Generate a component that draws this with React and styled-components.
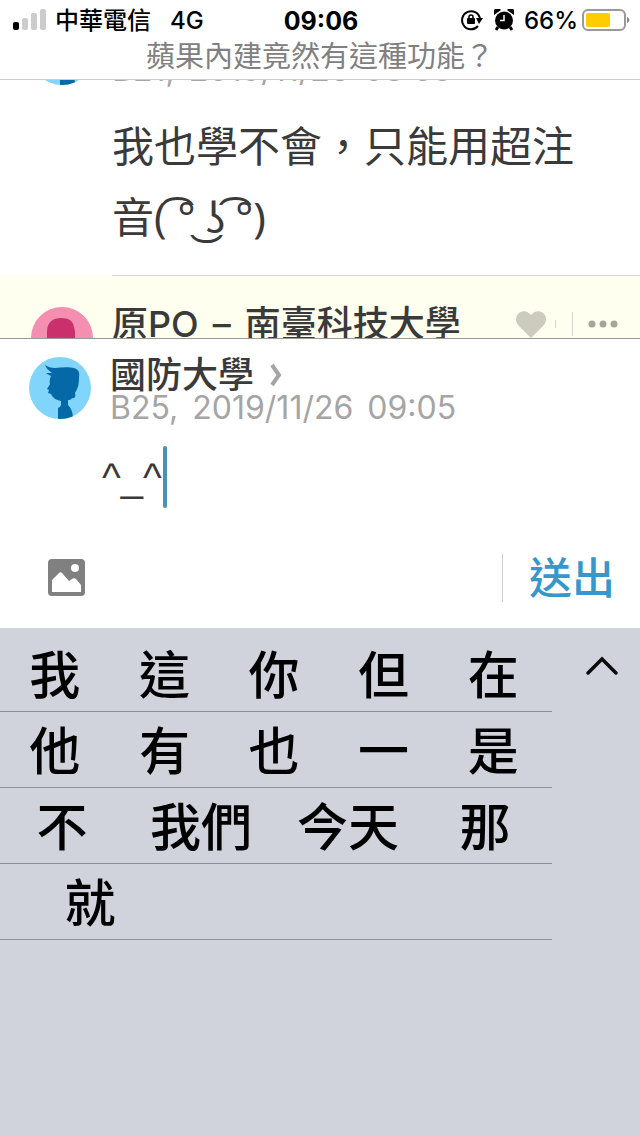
import { useState } from "react";
import styled, { createGlobalStyle } from "styled-components";

const candidateRows = [
  { columns: "repeat(5, 1fr) 4px", words: ["我", "這", "你", "但", "在"] },
  { columns: "repeat(5, 1fr) 4px", words: ["他", "有", "也", "一", "是"] },
  { columns: "124fr 154fr 140fr 134fr", words: ["不", "我們", "今天", "那"] },
  { columns: "180fr 372fr", words: ["就"] },
];

const BoyAvatar = () => (
  <Avatar viewBox="0 0 62 62" aria-hidden="true">
    <defs>
      <clipPath id="boy-clip">
        <circle cx="31" cy="31" r="31" />
      </clipPath>
    </defs>
    <circle cx="31" cy="31" r="31" fill="#81d4fa" />
    <path
      clipPath="url(#boy-clip)"
      fill="#0569a8"
      d="M16 8 C19 10 22 11 26 11 C33 10 41 10 45 11 C49 12 51 15 50 20 C50 28 49 31 46 36 C47 39 46 42 43 41 C42 43 40 43 39 43 V48 C42 51 44 55 44 62 H29 V51 C31 50 32 49 32 48 V44 C27 43 24 41 22 37 L19 36 L20 33 L18 32 L21 27 C20 24 21 21 22 19 C20 18 18 17 17 16 C19 16 21 16 23 16 C20 14 17 11 16 8 Z"
    />
  </Avatar>
);

const GirlAvatar = () => (
  <Avatar viewBox="0 0 62 62" aria-hidden="true">
    <circle cx="31" cy="31" r="31" fill="#f48fb1" />
    <path
      fill="#c9306c"
      d="M16 40 V25 C16 15 22 11 30 11 C38 11 42 14 43 20 C44 23 44 25 44 27 V40 Z"
    />
  </Avatar>
);

const StatusBar = () => (
  <Status>
    <StatusSide>
      <svg width="34" height="22" viewBox="0 0 34 22" aria-hidden="true">
        <rect x="1" y="13" width="6" height="8" rx="2" fill="#000" />
        <rect x="10" y="9" width="6" height="12" rx="2" fill="#ccc" />
        <rect x="19" y="4" width="6" height="17" rx="2" fill="#ccc" />
        <rect x="28" y="0" width="6" height="21" rx="2" fill="#ccc" />
      </svg>
      <Carrier>中華電信</Carrier>
      <Network>4G</Network>
    </StatusSide>
    <Clock>09:06</Clock>
    <StatusSide $end>
      <svg width="22" height="22" viewBox="0 0 22 22" aria-hidden="true">
        <path d="M17 17 A9 9 0 1 1 19 10" fill="none" stroke="#000" strokeWidth="2" />
        <path d="M15 9 H22 L18 15 Z" />
        <rect x="6" y="9" width="8" height="6" rx="1" />
        <path d="M8 10 V8 A2 2 0 0 1 12 8 V10" fill="none" stroke="#000" strokeWidth="1.5" />
      </svg>
      <AlarmIcon width="20" height="22" viewBox="0 0 20 22" aria-hidden="true">
        <circle cx="10" cy="11.5" r="9" fill="#000" />
        <path d="M0 6 A4 4 0 0 1 7 1 Z M20 6 A4 4 0 0 0 13 1 Z" fill="#000" />
        <path d="M4 18 L2 21 M16 18 L18 21" stroke="#000" strokeWidth="3" />
        <path d="M10 6 V11.5 H6" fill="none" stroke="#fff" strokeWidth="1.5" />
      </AlarmIcon>
      <Percent>66%</Percent>
      <svg width="48" height="22" viewBox="0 0 48 22" aria-hidden="true">
        <rect x="1" y="1" width="42" height="20" rx="5" fill="none" stroke="#999" strokeWidth="2" />
        <rect x="4" y="4" width="24" height="14" rx="2" fill="#ffcc00" />
        <path d="M45 8 C48 9 48 13 45 14 Z" fill="#888" />
      </svg>
    </StatusSide>
  </Status>
);

const PostMeta = ({ floor, date, time }) => (
  <Meta>
    <span>{floor},</span>
    <span>{date}</span>
    <span>{time}</span>
  </Meta>
);

const Thread = () => (
  <ThreadBox>
    <Comment>
      <PreviousHeader>
        <BoyAvatar />
        <HeaderText>
          <PostMeta floor="B21" date="2019/11/26" time="08:58" />
        </HeaderText>
      </PreviousHeader>
      <CommentText>
        我也學不會，只能用超注音<Face>( ͡° ͜ʖ ͡°)</Face>
      </CommentText>
    </Comment>
    <PosterComment>
      <GirlAvatar />
      <PosterBody>
        <School>
          <span>原PO</span>
          <span>–</span>
          <span>南臺科技大學</span>
        </School>
        <Actions>
          <IconButton aria-label="愛心">
            <svg width="30" height="27" viewBox="0 0 30 27">
              <path
                fill="#cccbbd"
                d="M15 27 L3 15 C-1 11 -1 5 3 2 C7 -1 12 0 15 4 C18 0 23 -1 27 2 C31 5 31 11 27 15 Z"
              />
            </svg>
          </IconButton>
          <Tick />
          <ActionDivider />
          <IconButton aria-label="更多">
            <svg width="30" height="8" viewBox="0 0 30 8" fill="#a5a59a">
              <circle cx="4" cy="4" r="3.5" />
              <circle cx="15" cy="4" r="3.5" />
              <circle cx="26" cy="4" r="3.5" />
            </svg>
          </IconButton>
        </Actions>
      </PosterBody>
    </PosterComment>
  </ThreadBox>
);

const Composer = () => {
  const [reply, setReply] = useState("^_^");

  return (
    <ComposerForm onSubmit={(e) => e.preventDefault()}>
      <ComposerHeader>
        <BoyAvatar />
        <HeaderText>
          <School>
            國防大學
            <svg width="14" height="24" viewBox="0 0 14 24" aria-hidden="true">
              <path d="M4 2 L11 12 L4 22" fill="none" stroke="#a5a5a5" strokeWidth="4" />
            </svg>
          </School>
          <PostMeta floor="B25" date="2019/11/26" time="09:05" />
        </HeaderText>
      </ComposerHeader>
      <ReplyRow>
        <ReplyInput
          aria-label="回應"
          value={reply}
          onChange={(e) => setReply(e.target.value)}
        />
        <Caret />
      </ReplyRow>
      <Toolbar>
        <IconButton type="button" aria-label="加入圖片">
          <svg width="38" height="38" viewBox="0 0 38 38">
            <rect x="1" y="0" width="37" height="37" rx="4" fill="#808080" />
            <circle cx="28" cy="9" r="4" fill="#fff" />
            <path
              fill="#fff"
              d="M5 33 V21 L12 14 C13 13 14 13 15 14 L22 22 L25 20 C26 19 28 19 29 20 L34 26 V33 Z"
            />
          </svg>
        </IconButton>
        <SendButton type="submit">送出</SendButton>
      </Toolbar>
    </ComposerForm>
  );
};

const Keyboard = () => (
  <KeyboardBox>
    <Candidates>
      {candidateRows.map((row) => (
        <CandidateRow key={row.words[0]} $columns={row.columns}>
          {row.words.map((word) => (
            <Candidate key={word} type="button">
              {word}
            </Candidate>
          ))}
        </CandidateRow>
      ))}
    </Candidates>
    <CollapseButton type="button" aria-label="收合">
      <svg width="34" height="22" viewBox="0 0 34 22">
        <path
          d="M3 18 L17 4 L31 18"
          fill="none"
          stroke="#0a0a0a"
          strokeWidth="3.5"
          strokeLinecap="round"
        />
      </svg>
    </CollapseButton>
  </KeyboardBox>
);

const App = () => {
  return (
    <Page>
      <GlobalStyle />
      <StatusBar />
      <Title>蘋果內建竟然有這種功能？</Title>
      <Thread />
      <Composer />
      <Keyboard />
    </Page>
  );
};

const GlobalStyle = createGlobalStyle`
  * {
    box-sizing: border-box;
  }

  body {
    margin: 0;
    background: #fff;
    color: #3a3a3a;
    font-family: Inter, "Noto Sans CJK TC", sans-serif;
  }

  button {
    padding: 0;
    border: none;
    background: none;
    color: inherit;
    font-family: inherit;
  }

  svg {
    display: block;
    flex-shrink: 0;
  }
`;

const Page = styled.div`
  display: flex;
  flex-direction: column;
  height: 100vh;
`;

const Status = styled.div`
  display: grid;
  grid-template-columns: 1fr auto 1fr;
  align-items: center;
  height: 40px;
  padding: 0 10px 0 12px;
  color: #000;
  font-size: 24px;
  line-height: 32px;
`;

const StatusSide = styled.div`
  display: flex;
  align-items: center;
  justify-content: ${({ $end }) => ($end ? "flex-end" : "flex-start")};
`;

const StatusText = styled.span`
  padding-top: 2px;
  font-weight: 500;
`;

const Carrier = styled(StatusText)`
  margin-left: 9px;
`;

const Network = styled(StatusText)`
  margin-left: 19px;
`;

const Clock = styled(StatusText)`
  font-size: 25px;
  font-weight: 700;
`;

const AlarmIcon = styled.svg`
  margin-left: 11px;
`;

const Percent = styled(StatusText)`
  margin: 0 4px 0 10px;
`;

const Title = styled.h1`
  height: 40px;
  margin: 0;
  border-bottom: 1px solid #ccc;
  color: #808080;
  font-size: 29px;
  font-weight: 400;
  line-height: 34px;
  text-align: center;
`;

const ThreadBox = styled.main`
  flex: 1;
  min-height: 0;
  overflow: hidden;
`;

const Avatar = styled.svg`
  width: 62px;
  height: 62px;
`;

// the thread is scrolled so that only the foot of the first header shows
const Comment = styled.article`
  margin-top: -57px;
`;

const CommentHeader = styled.header`
  display: flex;
  gap: 19px;
  padding-left: 29px;
`;

const PreviousHeader = styled(CommentHeader)`
  align-items: flex-end;
  padding-left: 31px;
`;

const HeaderText = styled.div`
  display: flex;
  flex-direction: column;
`;

const School = styled.div`
  display: flex;
  align-items: center;
  gap: 14px;
  font-size: 36px;
  font-weight: 500;
  line-height: 36px;
  white-space: nowrap;
`;

const Meta = styled.div`
  display: flex;
  gap: 14px;
  color: #a5a5a5;
  font-size: 32px;
  line-height: 30px;
`;

const CommentText = styled.p`
  margin: 0 0 0 112px;
  padding: 27px 64px 22px 0;
  font-size: 42px;
  line-height: 70px;
`;

const Face = styled.span`
  font-family: "Noto Sans", sans-serif;
  white-space: nowrap;
`;

const PosterComment = styled.article`
  display: flex;
  gap: 19px;
  padding-left: 31px;
  background: #fffff0;

  & > svg {
    margin-top: 32px;
  }
`;

const PosterBody = styled.div`
  display: flex;
  flex: 1;
  justify-content: space-between;
  padding: 30px 22px 60px 0;
  border-top: 1px solid #d5d5cc;
`;

const Actions = styled.div`
  display: flex;
  align-items: center;
  height: 36px;
`;

const IconButton = styled.button`
  display: flex;
`;

const Tick = styled.span`
  width: 1px;
  height: 8px;
  margin-left: 9px;
  background: #d5d5cc;
`;

const ActionDivider = styled.span`
  width: 1px;
  height: 24px;
  margin: 0 15px 0 16px;
  background: #d5d5cc;
`;

const ComposerForm = styled.form`
  border-top: 1px solid #999;
`;

const ComposerHeader = styled(CommentHeader)`
  padding-top: 18px;
`;

const ReplyRow = styled.div`
  display: flex;
  align-items: center;
  padding: 23px 0 0 102px;
`;

const ReplyInput = styled.input`
  field-sizing: content;
  height: 62px;
  padding: 0;
  border: none;
  outline: none;
  background: none;
  color: #3a3a3a;
  font-family: "Liberation Sans", "Noto Sans CJK TC", sans-serif;
  font-size: 40px;
`;

const Caret = styled.span`
  width: 4px;
  height: 62px;
  margin-left: 1px;
  border-radius: 2px;
  background: #4692b8;
`;

const Toolbar = styled.div`
  display: flex;
  align-items: center;
  justify-content: space-between;
  height: 120px;
  padding: 20px 25px 0 47px;
`;

const SendButton = styled.button`
  height: 48px;
  padding-left: 26px;
  border-left: 1px solid #ccc;
  color: #3797cd;
  font-size: 43px;
  font-weight: 500;
  line-height: 48px;
`;

const KeyboardBox = styled.section`
  display: flex;
  min-height: 508px;
  padding-top: 8px;
  background: #d0d3db;
`;

const Candidates = styled.div`
  flex: 1;
`;

const CandidateRow = styled.div`
  display: grid;
  grid-template-columns: ${({ $columns }) => $columns};
  height: 76px;
  border-bottom: 1px solid #8d9097;
`;

const Candidate = styled.button`
  padding-top: 4px;
  color: #000;
  font-size: 51px;
  font-weight: 500;
  line-height: 71px;
  white-space: nowrap;
`;

const CollapseButton = styled.button`
  display: flex;
  align-items: center;
  justify-content: center;
  width: 88px;
  height: 60px;
  padding-left: 12px;
`;

export default App;
